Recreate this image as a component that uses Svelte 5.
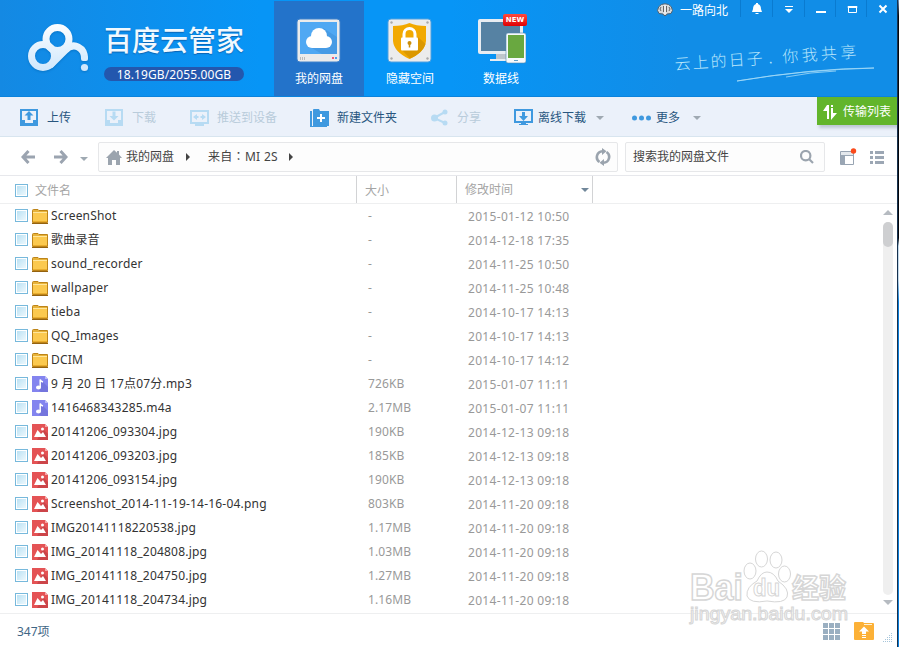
<script lang="ts">
	interface FileItem {
		kind: 'folder' | 'audio' | 'image'
		name: string
		size: string
		date: string
	}

	const files: Array<FileItem> = [
		{ kind: 'folder', name: 'ScreenShot', size: '-', date: '2015-01-12 10:50' },
		{ kind: 'folder', name: '歌曲录音', size: '-', date: '2014-12-18 17:35' },
		{ kind: 'folder', name: 'sound_recorder', size: '-', date: '2014-11-25 10:50' },
		{ kind: 'folder', name: 'wallpaper', size: '-', date: '2014-11-25 10:48' },
		{ kind: 'folder', name: 'tieba', size: '-', date: '2014-10-17 14:13' },
		{ kind: 'folder', name: 'QQ_Images', size: '-', date: '2014-10-17 14:13' },
		{ kind: 'folder', name: 'DCIM', size: '-', date: '2014-10-17 14:12' },
		{ kind: 'audio', name: '9 月 20 日 17点07分.mp3', size: '726KB', date: '2015-01-07 11:11' },
		{ kind: 'audio', name: '1416468343285.m4a', size: '2.17MB', date: '2015-01-07 11:11' },
		{ kind: 'image', name: '20141206_093304.jpg', size: '190KB', date: '2014-12-13 09:18' },
		{ kind: 'image', name: '20141206_093203.jpg', size: '185KB', date: '2014-12-13 09:18' },
		{ kind: 'image', name: '20141206_093154.jpg', size: '190KB', date: '2014-12-13 09:18' },
		{ kind: 'image', name: 'Screenshot_2014-11-19-14-16-04.png', size: '803KB', date: '2014-11-20 09:18' },
		{ kind: 'image', name: 'IMG20141118220538.jpg', size: '1.17MB', date: '2014-11-20 09:18' },
		{ kind: 'image', name: 'IMG_20141118_204808.jpg', size: '1.03MB', date: '2014-11-20 09:18' },
		{ kind: 'image', name: 'IMG_20141118_204750.jpg', size: '1.27MB', date: '2014-11-20 09:18' },
		{ kind: 'image', name: 'IMG_20141118_204734.jpg', size: '1.16MB', date: '2014-11-20 09:18' }
	]

	const tabs = [
		{ id: 'disk', label: '我的网盘' },
		{ id: 'vault', label: '隐藏空间' },
		{ id: 'cable', label: '数据线' }
	]

	let activeTab: string = $state('disk')
	let selected: Array<boolean> = $state(files.map(() => false))
</script>

<div class="window">
	<header>
		<div class="brand">
			<svg class="logo" width="64" height="54" viewBox="0 0 64 54">
				<defs>
					<linearGradient id="logoFill" x1="0" y1="0" x2="0" y2="54" gradientUnits="userSpaceOnUse">
						<stop offset="0" stop-color="#fff" />
						<stop offset="1" stop-color="#cbe5fc" />
					</linearGradient>
				</defs>
				<g fill="none" stroke="url(#logoFill)" stroke-width="7">
					<circle cx="17" cy="35" r="11.5" />
					<circle cx="31.5" cy="18" r="11.5" />
					<path d="M24 44.500 L39 29.500 C48 20 59 27 58.500 38" />
				</g>
				<rect x="55" y="34" width="7" height="6" rx="2" fill="#d9edfd" />
				<circle cx="58.5" cy="46.500" r="3.6" fill="#cfe7fc" />
			</svg>
			<div class="brandText">
				<h1>百度云管家</h1>
				<div class="quota">18.19GB/2055.00GB</div>
			</div>
		</div>

		<nav class="tabs">
			{#each tabs as tab}
				<button class={`tab ${activeTab === tab.id ? 'active' : ''}`} onclick={() => (activeTab = tab.id)}>
					{#if tab.id === 'disk'}
						<svg width="50" height="50" viewBox="0 0 50 50">
							<rect x="3" y="3" width="43" height="43" rx="3" fill="#ebebeb" stroke="#3f82cb" />
							<rect x="6" y="6" width="37" height="32" fill="#4fa8f3" />
							<path d="M29 12 L43 21 V38 H28 L16 31 Z" fill="#469be5" />
							<circle cx="25" cy="20" r="8" fill="#fff" />
							<rect x="12" y="20" width="26" height="12" rx="6" fill="#fff" />
							<path d="M6.500 41v3M8.500 41v3M10.500 41v3" stroke="#bbb" />
							<rect x="38" y="41" width="2" height="2" fill="#f05a78" />
							<rect x="41" y="41" width="2" height="2" fill="#4a9ff0" />
						</svg>
					{:else if tab.id === 'vault'}
						<svg width="50" height="50" viewBox="0 0 50 50">
							<rect x="3" y="3" width="43" height="43" rx="3" fill="#ececec" stroke="#4fa0e0" />
							<g fill="#aaa">
								<circle cx="6.500" cy="6.500" r="1.200" /><circle cx="42.500" cy="6.500" r="1.200" />
								<circle cx="6.500" cy="42.500" r="1.200" /><circle cx="42.500" cy="42.500" r="1.200" />
							</g>
							<path d="M8 10 Q18 10 24.500 7 Q31 10 41 10 V25 Q40 36 24.500 43 Q9 36 8 25 Z" fill="#f2a900" />
							<path d="M33 21 L40.500 28 Q38 37 25 42.500 L17 34 Z" fill="#db9800" />
							<path d="M19 23 V18 a5.500 5.500 0 0 1 11 0 V23" fill="none" stroke="#fff" stroke-width="3" />
							<rect x="16" y="21.500" width="17" height="13" rx="1" fill="#fff" />
							<circle cx="24.500" cy="27" r="2" fill="#cc8f0b" />
							<path d="M24.500 27v4.500" stroke="#cc8f0b" stroke-width="1.500" />
						</svg>
					{:else}
						<svg width="50" height="50" viewBox="0 0 50 50">
							<rect x="2" y="3" width="45" height="35" rx="2" fill="#e8edf2" />
							<rect x="5" y="6" width="39" height="29" fill="#5682a3" />
							<rect x="20" y="38" width="10" height="5" fill="#bfc6cc" />
							<rect x="14" y="43" width="22" height="2" fill="#e8edf2" />
							<rect x="30" y="17" width="20" height="30" rx="2" fill="#f7fafc" stroke="#5286ad" stroke-width=".6" />
							<rect x="32" y="19" width="16" height="23" fill="#69a840" />
							<path d="M38 44.500h4" stroke="#62a0c8" />
						</svg>
						<span class="newBadge">NEW</span>
					{/if}
					<span>{tab.label}</span>
				</button>
			{/each}
		</nav>

		<div class="headerEnd">
			<div class="controls">
				<div class="user">
					<svg width="16" height="14" viewBox="0 0 16 14">
						<path d="M4.500 1.500 Q8 0 11.500 1.500 Q15 3 15.500 7.500 L14 10.500 L10 11 L9 12.500 H7 L6 11 L2 10.500 L.5 7.500 Q1 3 4.500 1.500Z" fill="#d8dadb" stroke="#4d6274" />
						<path d="M4 4q-2 2 0 4M12 4q2 2 0 4M6.500 3v6M9.500 3v6" fill="none" stroke="#666" />
						<path d="M7.500 2h1v9h-1z" fill="#fff" />
					</svg>
					<span>一路向北</span>
				</div>
				<div class="control">
					<svg width="12" height="14" viewBox="0 0 12 14"><path d="M5 1h2v1q3 1 3 5l1 3H1l1-3q0-4 3-5zM4.500 11h3v1h-3z" fill="#fff" /></svg>
				</div>
				<div class="control">
					<svg width="12" height="14" viewBox="0 0 12 14"><path d="M2 4h8v1H2zM2 7h8L6 11z" fill="#fff" /></svg>
				</div>
				<div class="control narrow">
					<svg width="12" height="14" viewBox="0 0 12 14"><path d="M1 9h10v2H1z" fill="#fff" /></svg>
				</div>
				<div class="control narrow">
					<svg width="12" height="14" viewBox="0 0 12 14"><path d="M2.500 4.500h8v6h-8zM2 4.500h9v1H2z" fill="none" stroke="#fff" /></svg>
				</div>
				<div class="control narrow">
					<svg width="12" height="14" viewBox="0 0 12 14"><path d="M2.500 3.500l7 7m0-7l-7 7" stroke="#fff" stroke-width="2" /></svg>
				</div>
			</div>
			<svg class="slogan" width="210" height="62" viewBox="0 0 210 62">
				<g transform="rotate(-4 5 45)">
					<text x="4" y="46" textLength="88">云上的日子</text>
					<text x="98" y="46">.</text>
					<text x="112" y="46" textLength="74">你我共享</text>
				</g>
				<path d="M66 57 Q130 46 203 44 Q145 44 66 57M115 53 Q140 48 165 47" fill="none" stroke="#a3daf7" stroke-width=".8" />
			</svg>
		</div>
	</header>

	<div class="toolbar">
		<div class="tool upload">
			<svg width="18" height="17" viewBox="0 0 18 17"><path d="M0 0h18v17H0zM2 2v9h3v3h8v-3h3V2z" fill-rule="evenodd" /><path d="M9 2l4.500 4.500h-3V11h-3V6.500h-3z" /></svg>
			<span>上传</span>
		</div>
		<div class="tool download off">
			<svg width="18" height="17" viewBox="0 0 18 17"><path d="M0 0h18v17H0zM2 2v9h3v3h8v-3h3V2z" fill-rule="evenodd" /><path d="M9 11.500L4.500 7h3V2.500h3V7h3z" /></svg>
			<span>下载</span>
		</div>
		<div class="tool push off">
			<svg width="19" height="16" viewBox="0 0 19 16"><path d="M0 0h19v14H0zM2 2v10h15V2z" fill-rule="evenodd" /><path d="M3 7l4-3v2h1.500v2H7v2zM16 7l-4-3v2h-1.500v2H12v2zM5 14h9v2H5z" /></svg>
			<span>推送到设备</span>
		</div>
		<div class="tool create">
			<svg width="19" height="18" viewBox="0 0 19 18"><path d="M0 2h2v14h0v2H0zM3 1q0-1 1-1h5l1 2h9v15H3z" /><path d="M11 5v8M7 9h8" stroke="#fff" stroke-width="2" /><path d="M2 17h15v1H0V2h1v15z" /></svg>
			<span>新建文件夹</span>
		</div>
		<div class="tool share off">
			<svg width="17" height="17" viewBox="0 0 17 17"><path d="M14 3L3 9l11 5" fill="none" stroke="#b7dbf3" stroke-width="2" /><circle cx="3.500" cy="9" r="3.500" /><circle cx="14" cy="3" r="2.500" /><circle cx="14" cy="14" r="2.500" /></svg>
			<span>分享</span>
		</div>
		<div class="tool offline">
			<svg width="19" height="17" viewBox="0 0 19 17"><path d="M0 0h19v14H0zM2 2v10h15V2z" fill-rule="evenodd" /><path d="M8 3h3v4h3l-4.500 5L5 7h3zM7 13h5v2h2v1H5v-1h2z" /></svg>
			<span>离线下载</span>
			<i class="caret"></i>
		</div>
		<div class="tool more">
			<svg width="20" height="6" viewBox="0 0 20 6"><circle cx="2.500" cy="3" r="2.500" /><circle cx="9.500" cy="3" r="2.500" /><circle cx="16.500" cy="3" r="2.500" /></svg>
			<span>更多</span>
			<i class="caret"></i>
		</div>
		<div class="transfer">
			<svg width="16" height="18" viewBox="0 0 16 18"><path d="M5 2h2v14H5V8H1zM9 2h2v2H9zM9 5h2v5h4l-6 7z" fill="#fff" /></svg>
			<span>传输列表</span>
		</div>
	</div>

	<div class="navbar">
		<svg class="back" width="15" height="14" viewBox="0 0 15 14"><path d="M7.500 1L2 7l5.500 6M2 7h12" /></svg>
		<svg class="forward" width="15" height="14" viewBox="0 0 15 14"><path d="M7.500 1L13 7l-5.500 6M13 7H1" /></svg>
		<i class="caret"></i>
		<div class="crumbs">
			<svg width="16" height="15" viewBox="0 0 16 15"><path d="M8 0l3 2.800V1h2v3.600L16 8h-2v7h-4v-5H6v5H2V8H0z" fill="#9ba4ae" /></svg>
			<span>我的网盘</span>
			<i class="arrow"></i>
			<span class="device">来自：MI 2S</span>
			<i class="arrow"></i>
			<svg class="refresh" width="16" height="18" viewBox="0 0 16 18">
				<path d="M4.500 14 A5.900 5.900 0 0 1 7.500 3.200M11.500 4 A5.900 5.900 0 0 1 8.500 14.800" fill="none" stroke="#9ba4ae" stroke-width="2.600" />
				<path d="M7 0l4.500 3.300L7 7zM9 18l-4.500-3.300L9 11z" fill="#9ba4ae" />
			</svg>
		</div>
		<div class="search">
			<span>搜索我的网盘文件</span>
			<svg width="14" height="14" viewBox="0 0 14 14"><circle cx="5.700" cy="5.700" r="4.700" /><path d="M9 9l4 4" /></svg>
		</div>
		<svg class="layout" width="18" height="18" viewBox="0 0 18 18"><path d="M1.500 4.500h13v13h-13z" fill="#fff" stroke="#98a4b2" /><path d="M2 5h12v3H2z" fill="#e4e8ec" /><path d="M2 8h12v1H6v8H2z" fill="#9aa6b4" /><circle cx="14.500" cy="4" r="2.700" fill="#fa4a1b" /></svg>
		<svg class="list" width="14" height="13" viewBox="0 0 14 13"><path d="M0 0h3v3H0zM5 0h9v3H5zM0 5h3v3H0zM5 5h9v3H5zM0 10h3v3H0zM5 10h9v3H5z" fill="#9ca7b4" /></svg>
	</div>

	<div class="columns">
		<div class="nameHead"><i class="check"></i><span>文件名</span></div>
		<div class="sizeHead">大小</div>
		<div class="dateHead"><span>修改时间</span><i class="caret"></i></div>
	</div>

	<main>
		<div class="rows">
			{#each files as file, index}
				<div class="row">
					<input type="checkbox" class="check" bind:checked={selected[index]} />
					<svg class="fileIcon" width="16" height="16" viewBox="0 0 16 16">
						{#if file.kind === 'folder'}
							<path d="M.5 2.500q0-1 1-1H6l1 1h8.500v12H.5z" fill="#e7b33a" stroke="#bd8419" />
							<path d="M1 5h14v9H1z" fill="#fbc94f" />
							<path d="M1 4.500h14" stroke="#ffe69c" />
							<path d="M1 13h14v1H1z" fill="#e9ad2e" />
							<path d="M0 15.500h16" stroke="#94620f" />
						{:else if file.kind === 'audio'}
							<path d="M0 0h13l3 3v13H0z" fill="#8384ef" />
							<path d="M9 4l7 7v5H9l-4-3z" fill="#7475dd" />
							<path d="M13 0v3h3z" fill="#b9baf6" />
							<ellipse cx="6.500" cy="11.500" rx="2.500" ry="2" fill="#fff" />
							<path d="M8.200 11.500V3.500q.5 2 2.800 2.500" fill="none" stroke="#fff" stroke-width="1.500" />
						{:else}
							<path d="M0 0h13l3 3v13H0z" fill="#e45355" />
							<path d="M11 5l5 5v6H5z" fill="#cc4549" />
							<path d="M13 0v3h3z" fill="#f4a6a7" />
							<path d="M2 13l3.500-7L9 10l2-2 3 5z" fill="#fff" />
							<circle cx="10.500" cy="5" r="1.500" fill="#fff" />
						{/if}
					</svg>
					<span class="name">{file.name}</span>
					<span class="size">{file.size}</span>
					<span class="date">{file.date}</span>
				</div>
			{/each}
		</div>
		<div class="scrollbar">
			<i class="up"></i>
			<div class="track"><div class="thumb"></div></div>
			<i class="down"></i>
		</div>
	</main>

	<footer>
		<span class="count">347项</span>
		<svg class="grid" width="17" height="17" viewBox="0 0 17 17"><path d="M0 0h5v5H0zM6 0h5v5H6zM12 0h5v5h-5zM0 6h5v5H0zM6 6h5v5H6zM12 6h5v5h-5zM0 12h5v5H0zM6 12h5v5H6zM12 12h5v5h-5z" fill="#9aafc1" /></svg>
		<svg class="sync" width="20" height="18" viewBox="0 0 20 18">
			<path d="M1 0h8l1 1h9q1 0 1 1v15q0 1-1 1H1q-1 0-1-1V1q0-1 1-1z" fill="#fcb137" />
			<path d="M10 2.500h8" stroke="#fff2d4" />
			<path d="M10 4.500l5 5h-3V12H8V9.500H5zM8 13h4v1H8zM8 15h4v1H8z" fill="#fff" />
		</svg>
		<svg class="grip" width="9" height="9" viewBox="0 0 9 9"><path d="M8 0h1v1H8zM6 2h1v1H6zM8 2h1v1H8zM4 4h1v1H4zM6 4h1v1H6zM8 4h1v1H8zM2 6h1v1H2zM4 6h1v1H4zM6 6h1v1H6zM8 6h1v1H8zM0 8h1v1H0zM2 8h1v1H2zM4 8h1v1H4zM6 8h1v1H6zM8 8h1v1H8z" fill="#a6c5da" /></svg>
	</footer>

	<svg class="watermark" width="164" height="80" viewBox="0 0 164 80">
		<g fill="#fff" stroke="#d6d6d6">
			<text class="mark heavy" x="3" y="54" font-size="36" textLength="53" lengthAdjust="spacingAndGlyphs">Bai</text>
			<ellipse cx="63" cy="25" rx="6" ry="8" />
			<ellipse cx="74.500" cy="13" rx="6" ry="8" />
			<ellipse cx="89" cy="14" rx="6" ry="8" />
			<ellipse cx="97.500" cy="28" rx="6" ry="8" />
			<path d="M80 26 Q87 26 91 35 Q103 43 100 51 Q97 58 80 55 Q63 58 60 50 Q59 41 70 35 Q74 26 80 26Z" />
			<text class="mark" x="66" y="50" font-size="23" textLength="27" lengthAdjust="spacingAndGlyphs">du</text>
			<text class="mark heavy" x="105" y="52" font-size="27" textLength="54">经验</text>
			<text class="mark url" x="3" y="74" font-size="18" textLength="158" lengthAdjust="spacingAndGlyphs">jingyan.baidu.com</text>
		</g>
	</svg>
	<div class="edge"></div>
</div>

<style>
	:global(body) {
		overflow: hidden;
		background: #fff;
	}

	.window {
		position: relative;
		box-sizing: border-box;
		width: 899px;
		height: 647px;
		padding-right: 2px;
		display: flex;
		flex-direction: column;
		overflow: hidden;
		background: #fff;
		color: #333;
		font: 12px/16px 'Noto Sans', 'Noto Sans CJK SC', sans-serif;
	}

	.edge {
		position: absolute;
		top: 0;
		right: 0;
		box-sizing: border-box;
		width: 2px;
		height: 100%;
		border-left: 1px solid #17324f;
		background: linear-gradient(#7392b8 0, #05070c 16px 238px, #c3d9ea 246px 280px, #0b7fdc 302px);
	}

	svg {
		display: block;
		flex: none;
	}

	header {
		height: 97px;
		flex: none;
		display: flex;
		background: linear-gradient(90deg, #1489e3 0, #0795f6 260px, #0795f6 450px, #118de7 680px);
		box-shadow: inset 0 -1px #0b83dc;
		color: #fff;
	}

	.brand {
		width: 274px;
		display: flex;
	}

	.logo {
		margin: 21px 0 0 26px;
		filter: drop-shadow(0 1px 1px #0875c8);
	}

	.brandText {
		margin: 22px 0 0 14px;
	}

	h1 {
		margin: 0 0 9px;
		height: 36px;
		font: 500 28px/35px 'Noto Sans CJK SC', sans-serif;
		color: #f1f9ff;
		text-shadow: 0 1px 1px #0b65b4;
		white-space: nowrap;
	}

	.quota {
		width: 140px;
		height: 14px;
		border-radius: 7px;
		background: #2357ae;
		text-align: center;
		line-height: 15px;
		letter-spacing: 0.1px;
	}

	.tabs {
		display: flex;
		gap: 1px;
		padding-top: 1px;
	}

	.tab {
		position: relative;
		width: 90px;
		height: 95px;
		padding: 15px 0 0;
		border: 0;
		display: flex;
		flex-direction: column;
		align-items: center;
		gap: 5px;
		background: none;
		color: #fff;
		font: inherit;
	}

	.tab.active {
		background: #2373ca;
	}

	.newBadge {
		position: absolute;
		top: 13px;
		left: 47px;
		width: 24px;
		height: 12px;
		border-radius: 2px;
		background: linear-gradient(#ff4a3c, #e10004);
		font: bold 7px/12px 'DejaVu Sans', sans-serif;
	}

	.headerEnd {
		margin-left: auto;
		width: 240px;
	}

	.controls {
		display: flex;
		height: 20px;
	}

	.user {
		width: 83px;
		display: flex;
		gap: 7px;
		padding-top: 3px;
	}

	.user span {
		white-space: nowrap;
	}

	.control {
		width: 32.5px;
		height: 17px;
		border-left: 1px solid #0a7bd0;
		box-sizing: border-box;
		padding: 2px 0 0 10px;
	}

	.control.narrow {
		width: 31px;
	}

	.slogan {
		margin: 4px 0 0 14px;
		fill: #b9e5fb;
		font: 300 16px 'Noto Sans CJK SC', sans-serif;
	}

	.toolbar {
		height: 39px;
		flex: none;
		display: flex;
		background: #ebf1fa;
		border-bottom: 1px solid #d8e5ef;
	}

	.tool {
		display: flex;
		align-items: center;
		gap: 9px;
		color: #28567f;
		fill: #3f99df;
		padding-top: 2px;
		box-sizing: border-box;
		white-space: nowrap;
	}

	.tool.off {
		color: #b9ccdb;
		fill: #b7dbf3;
	}

	.upload {
		width: 85px;
		margin-left: 20px;
	}

	.download {
		width: 85px;
	}

	.push {
		width: 120px;
		gap: 8px;
	}

	.create {
		width: 121px;
		gap: 8px;
	}

	.share {
		width: 83px;
	}

	.offline {
		width: 118px;
		gap: 5px;
	}

	.more {
		gap: 4px;
	}

	.caret {
		border: 4px solid transparent;
		border-top-color: #9fa9b2;
		border-bottom: 0;
	}

	.tool .caret {
		margin-left: 5px;
	}

	.more .caret {
		margin-left: 9px;
	}

	.transfer {
		width: 80px;
		height: 28px;
		margin-left: auto;
		display: flex;
		align-items: center;
		gap: 5px;
		padding: 1px 0 0 5px;
		box-sizing: border-box;
		background: #62b52b;
		box-shadow: 2px 3px 3px #bdc7d4;
		color: #fff;
		white-space: nowrap;
	}

	.navbar {
		height: 38px;
		flex: none;
		display: flex;
		align-items: center;
		border-bottom: 1px solid #e7e8ec;
		color: #444;
	}

	.back,
	.forward {
		margin-top: 2px;
		fill: none;
		stroke: #9ba4b0;
		stroke-width: 3;
	}

	.back {
		margin-left: 21px;
	}

	.forward {
		margin-left: 17px;
		margin-right: 12px;
	}

	.navbar > .caret {
		margin-top: 5px;
	}

	.crumbs,
	.search {
		box-sizing: border-box;
		height: 30px;
		border: 1px solid #e6e7e9;
		border-radius: 2px;
		display: flex;
		align-items: center;
		background: #fdfdfd;
		margin-top: 2px;
	}

	.crumbs {
		width: 520px;
		margin-left: 10px;
		padding: 0 6px 0 7px;
	}

	.crumbs span {
		margin-left: 4px;
	}

	.crumbs .device {
		margin-left: 18px;
		font-family: 'Noto Sans', 'Noto Sans CJK TC', sans-serif;
		letter-spacing: 0.3px;
	}

	.arrow {
		margin-left: 12px;
		border: 4px solid transparent;
		border-left-color: #444;
		border-right: 0;
	}

	.device + .arrow {
		margin-left: 11px;
	}

	.refresh {
		margin-left: auto;
	}

	.search {
		width: 200px;
		margin-left: 7px;
		padding: 0 10px 0 7px;
		justify-content: space-between;
	}

	.search svg {
		fill: none;
		stroke: #9ba4ae;
		stroke-width: 2.2;
	}

	.layout {
		margin-left: 14px;
	}

	.list {
		margin: 3px 0 0 13px;
	}

	.columns {
		height: 27px;
		flex: none;
		display: flex;
		line-height: 29px;
		border-bottom: 1px solid #eeeff0;
		color: #a5a5a5;
	}

	.columns > div {
		box-sizing: border-box;
		border-right: 1px solid #d2d3d5;
	}

	.nameHead {
		width: 357px;
		display: flex;
		align-items: center;
		gap: 7px;
		padding: 1px 0 0 15px;
	}

	.check {
		appearance: none;
		box-sizing: border-box;
		width: 13px;
		height: 13px;
		margin: 0;
		flex: none;
		border: 1px solid #77b9dc;
		background: linear-gradient(135deg, #b5dff3, #f2fafd);
		box-shadow: inset 0 0 0 1px #fff;
	}

	.row .check {
		margin-bottom: 1px;
	}

	.check:checked {
		background: #3f99df;
	}

	.sizeHead {
		width: 100px;
		padding-left: 8px;
	}

	.dateHead {
		width: 136px;
		padding: 0 3px 0 8px;
		display: flex;
		align-items: center;
		justify-content: space-between;
	}

	.dateHead .caret {
		border-top-color: #71879a;
	}

	main {
		height: 409px;
		flex: none;
		display: flex;
		justify-content: space-between;
	}

	.row {
		height: 24px;
		display: flex;
		align-items: center;
		padding-left: 15px;
	}

	.fileIcon {
		margin: 0 3px 0 4px;
	}

	.name {
		width: 317px;
		white-space: nowrap;
		letter-spacing: 0.2px;
	}

	.size {
		width: 100px;
		color: #999;
		letter-spacing: 0.1px;
	}

	.date {
		color: #999;
		padding-top: 2px;
		letter-spacing: 0.32px;
	}

	.scrollbar {
		width: 10px;
		margin-right: 4px;
		padding: 6px 0 8px;
		display: flex;
		flex-direction: column;
		align-items: center;
	}

	.track {
		flex: 1;
		width: 10px;
		margin: 7px 0 5px;
		border-radius: 5px;
		background: #efefef;
	}

	.thumb {
		height: 25px;
		border-radius: 5px;
		background: #cecfd1;
	}

	.up,
	.down {
		border: 5px solid transparent;
		border-bottom-color: #b6bbc1;
		border-top: 0;
	}

	.down {
		border-bottom: 0;
		border-top: 5px solid #b6bbc1;
	}

	footer {
		flex: 1;
		display: flex;
		align-items: center;
		border-top: 1px solid #eeeff0;
		color: #3f6685;
	}

	.count {
		margin: 0 auto 0 17px;
		padding-top: 2px;
	}

	.grid {
		margin-top: 2px;
	}

	.sync {
		margin: 0 9px 0 14px;
	}

	.grip {
		margin: 13px 5px 0 0;
	}

	.watermark {
		position: absolute;
		left: 687px;
		top: 546px;
	}

	.mark {
		font-family: 'Liberation Sans', 'Noto Sans CJK SC', sans-serif;
		font-weight: bold;
	}

	.heavy {
		stroke-width: 1.5;
	}

	.url {
		font-weight: normal;
	}
</style>
